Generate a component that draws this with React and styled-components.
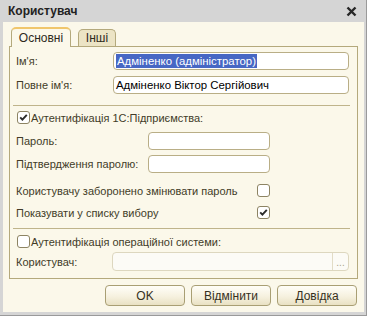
import React from 'react';
import styled, { createGlobalStyle } from 'styled-components';

const GlobalStyle = createGlobalStyle`
  html, body {
    margin: 0;
    padding: 0;
  }
  body {
    font-family: "Liberation Sans", Arial, sans-serif;
    font-size: 11px;
    color: #423c28;
  }
`;

const Window = styled.div`
  width: 367px;
  height: 316px;
  box-sizing: border-box;
  background: #d5d5d5;
  border-right: 1px solid #9a9a9a;
  border-bottom: 1px solid #9a9a9a;
  display: flex;
  flex-direction: column;
`;

const TitleBar = styled.div`
  height: 22px;
  flex-shrink: 0;
  display: flex;
  align-items: center;
  justify-content: space-between;
  padding: 0 9px 0 8px;
  font-weight: bold;
  font-size: 12px;
  color: #222;
`;

const Body = styled.div`
  flex: 1;
  margin: 0 2px 3px 3px;
  background: #fbf8ea;
  padding: 6px 6px 0 6px;
  display: flex;
  flex-direction: column;
`;

const TabStrip = styled.div`
  display: flex;
  align-items: flex-end;
  gap: 7px;
  padding-left: 2px;
  height: 19px;
  margin-bottom: -1px;
  position: relative;
  z-index: 1;
`;

const Tab = styled.div`
  box-sizing: border-box;
  width: ${p => p.$w}px;
  height: ${p => (p.$active ? 20 : 17)}px;
  margin-bottom: ${p => (p.$active ? 0 : 1)}px;
  border: 1px solid #b4a97c;
  border-top: ${p => (p.$active ? '2px solid #f0c66c' : '1px solid #b4a97c')};
  border-bottom: none;
  border-radius: 5px 5px 0 0;
  background: ${p => (p.$active ? '#fbf8ea' : '#ece4c5')};
  display: flex;
  align-items: center;
  justify-content: center;
  font-size: 12px;
  color: #2e2a1c;
`;

const Panel = styled.div`
  box-sizing: border-box;
  height: 233px;
  border: 1px solid #b4a97c;
  padding: 5px 8px 0 6px;
  display: flex;
  flex-direction: column;
`;

const Row = styled.div`
  display: flex;
  align-items: center;
  height: ${p => p.$h || 18}px;
  margin-top: ${p => p.$top || 0}px;
`;

const Label = styled.div`
  width: ${p => p.$w}px;
  flex-shrink: 0;
  white-space: nowrap;
`;

const Field = styled.div`
  box-sizing: border-box;
  height: 18px;
  width: ${p => (p.$w ? `${p.$w}px` : 'auto')};
  flex: ${p => (p.$w ? 'none' : 1)};
  border: 1px solid #b9ae86;
  border-radius: 4px;
  background: #fff;
  font-size: 11.4px;
  color: #000;
  display: flex;
  align-items: center;
  padding-left: 2px;
  white-space: nowrap;
  overflow: hidden;
`;

const Selected = styled.span`
  background: #4767c4;
  color: #fff;
  line-height: 14px;
  padding: 0 1px;
`;

const DisabledField = styled.div`
  box-sizing: border-box;
  height: 19px;
  flex: 1;
  border: 1px solid #ddd7bf;
  border-radius: 4px;
  background: #fcfbf6;
  display: flex;
  justify-content: flex-end;
`;

const DotsButton = styled.div`
  width: 16px;
  border-left: 1px solid #e2dcc6;
  color: #aaa48a;
  font-size: 10px;
  display: flex;
  align-items: flex-end;
  justify-content: center;
  padding-bottom: 2px;
  box-sizing: border-box;
`;

const Separator = styled.div`
  height: 1px;
  background: #bfb48b;
  margin: ${p => p.$top}px -1px 0 -3px;
`;

const Box = styled.div`
  box-sizing: border-box;
  width: 13px;
  height: 13px;
  flex-shrink: 0;
  border: 1px solid #8d8463;
  border-radius: 3px;
  background: #fff;
  display: flex;
  align-items: center;
  justify-content: center;
  margin-left: ${p => p.$left || 0}px;
`;

const CheckLabel = styled.div`
  display: flex;
  align-items: center;
  margin-left: 1px;
`;

const ButtonBar = styled.div`
  display: flex;
  justify-content: flex-end;
  gap: 6px;
  padding: 6px 1px 0 0;
`;

const Button = styled.div`
  box-sizing: border-box;
  width: 80px;
  height: 21px;
  border: 1px solid #a99f74;
  border-radius: 4px;
  background: linear-gradient(#fffef8, #f6f1df 55%, #e9e1c3);
  display: flex;
  align-items: center;
  justify-content: center;
  font-size: 12px;
  color: #36301d;
`;

function Check({ on, left }) {
  return (
    <Box $left={left}>
      {on && (
        <svg width="9" height="9" viewBox="0 0 9 9">
          <path d="M1.2 4.4 L3.4 6.6 L7.8 1.8" fill="none" stroke="#2b2b2b" strokeWidth="1.9" />
        </svg>
      )}
    </Box>
  );
}

function CloseIcon() {
  return (
    <svg width="11" height="11" viewBox="0 0 11 11">
      <path d="M1.5 1.5 L9.5 9.5 M9.5 1.5 L1.5 9.5" stroke="#262626" strokeWidth="2.4" />
    </svg>
  );
}

export default function App() {
  return (
    <>
      <GlobalStyle />
      <Window>
        <TitleBar>
          <span>Користувач</span>
          <CloseIcon />
        </TitleBar>
        <Body>
          <TabStrip>
            <Tab $active $w={60}>Основні</Tab>
            <Tab $w={38}>Інші</Tab>
          </TabStrip>
          <Panel>
            <Row>
              <Label $w={97}>Ім'я:</Label>
              <Field><Selected>Адміненко (адміністратор)</Selected></Field>
            </Row>
            <Row $top={6}>
              <Label $w={97}>Повне ім'я:</Label>
              <Field>Адміненко Віктор Сергійович</Field>
            </Row>
            <Separator $top={11} />
            <Row $h={13} $top={5}>
              <Check on left={1} />
              <CheckLabel>Аутентифікація 1С:Підприємства:</CheckLabel>
            </Row>
            <Row $top={8}>
              <Label $w={132}>Пароль:</Label>
              <Field $w={122} />
            </Row>
            <Row $top={5}>
              <Label $w={132}>Підтвердження паролю:</Label>
              <Field $w={122} />
            </Row>
            <Row $h={13} $top={11}>
              <Label $w={241}>Користувачу заборонено змінювати пароль</Label>
              <Check />
            </Row>
            <Row $h={13} $top={9}>
              <Label $w={241}>Показувати у списку вибору</Label>
              <Check on />
            </Row>
            <Separator $top={9} />
            <Row $h={13} $top={6}>
              <Check left={1} />
              <CheckLabel>Аутентифікація операційної системи:</CheckLabel>
            </Row>
            <Row $h={19} $top={4}>
              <Label $w={96}>Користувач:</Label>
              <DisabledField>
                <DotsButton>...</DotsButton>
              </DisabledField>
            </Row>
          </Panel>
          <ButtonBar>
            <Button>OK</Button>
            <Button>Відмінити</Button>
            <Button>Довідка</Button>
          </ButtonBar>
        </Body>
      </Window>
    </>
  );
}
